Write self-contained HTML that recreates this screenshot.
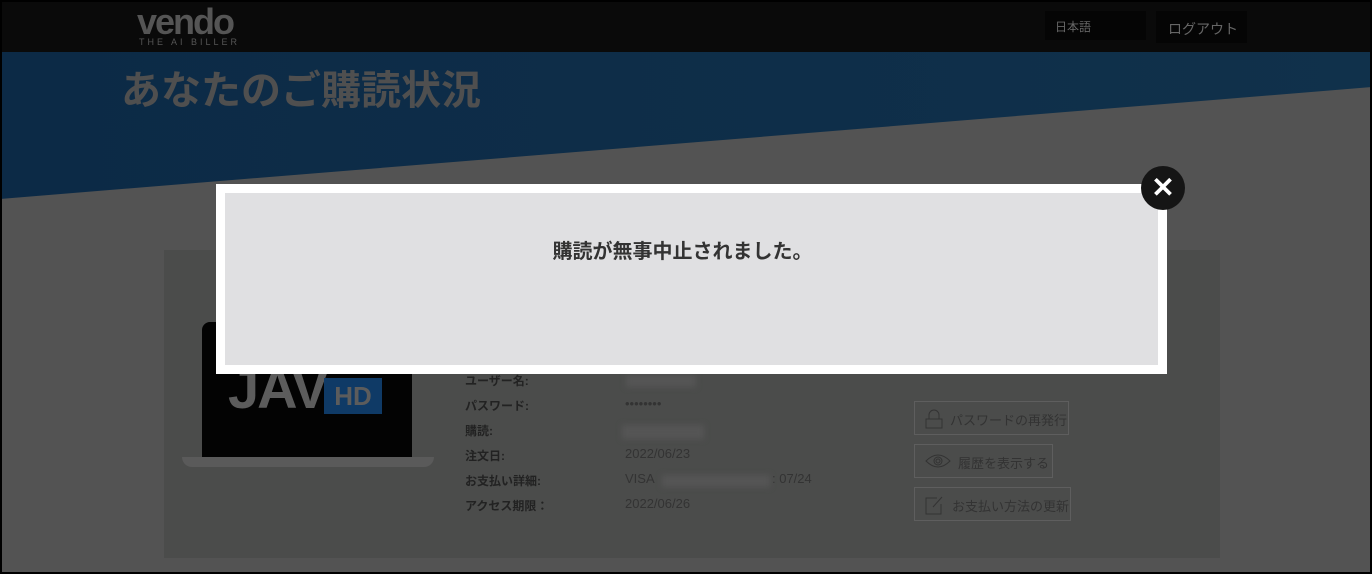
<!DOCTYPE html>
<html><head><meta charset="utf-8"><style>
*{margin:0;padding:0;box-sizing:border-box}
body{width:1372px;height:574px;overflow:hidden;background:#535353;font-family:"Liberation Sans","Noto Sans CJK JP",sans-serif;position:relative}
.border{position:absolute;left:0;top:0;width:1372px;height:574px;border:2px solid #000;z-index:50;pointer-events:none}
.hdr{position:absolute;left:0;top:0;width:100%;height:52px;background:#0a0a0a}
.blue{position:absolute;left:0;top:52px;width:100%;height:150px;background:linear-gradient(90deg,#0c2a46,#10314b);clip-path:polygon(0 0,100% 0,100% 35px,0 147px)}
.title{position:absolute;left:121px;top:58px;font-size:40px;font-weight:bold;color:#4f4f4f;letter-spacing:0}
.logo{position:absolute;left:137px;top:1px;color:#555;font-size:36px;font-weight:bold;letter-spacing:-2px}
.logo small{position:absolute;left:2px;top:36px;font-size:9px;letter-spacing:3px;font-weight:normal;white-space:nowrap}
.lang{position:absolute;left:1045px;top:11px;width:101px;height:29px;background:#050505;color:#666;font-size:12px;padding:7px 10px}
.out{position:absolute;left:1156px;top:11px;width:91px;height:32px;background:#050505;color:#666;font-size:14px;padding:8px 0 0 12px;white-space:nowrap}
.card{position:absolute;left:164px;top:250px;width:1056px;height:308px;background:#4b4c4b}
.lap{position:absolute;left:202px;top:322px;width:210px;height:140px;background:#030303;border-radius:8px 8px 0 0}
.lapbase{position:absolute;left:182px;top:457px;width:252px;height:10px;background:#5a5a5a;border-radius:0 0 30px 30px}
.jav{position:absolute;left:228px;top:356px;font-size:56px;font-weight:bold;color:#5c5c5c;letter-spacing:-2px}
.hd{position:absolute;left:324px;top:378px;width:58px;height:36px;background:#0f3a66;color:#5c5c5c;font-weight:bold;font-size:26px;text-align:center;line-height:36px}
.lbl{position:absolute;left:465px;font-size:12px;color:#222;font-weight:bold}
.val{position:absolute;left:625px;font-size:13px;color:#333}
.blur{position:absolute;background:#555;filter:blur(3px)}
.btn{position:absolute;left:914px;height:34px;border:1px solid #5e5e5e;color:#333;font-size:13px;padding:8px 0 0 35px;white-space:nowrap}
.modal{position:absolute;left:216px;top:184px;width:951px;height:190px;background:#fff;padding:9px}
.inner{width:100%;height:100%;background:#e0e0e2;text-align:center;padding-top:42px;padding-right:18px;font-size:20px;font-weight:bold;color:#333}
.close{position:absolute;left:1141px;top:166px;width:44px;height:44px;border-radius:50%;background:#151515;color:#fff;font-size:28px;font-weight:bold;text-align:center;line-height:43px}
</style></head><body>
<div class="hdr"></div>
<div class="logo">vendo<small>THE AI BILLER</small></div>
<div class="lang">日本語</div><div class="out">ログアウト</div>
<div class="blue"></div>
<div class="title">あなたのご購読状況</div>
<div class="card"></div>
<div style="position:absolute;left:914px;top:368px;width:185px;height:6px;background:#0c3a30"></div>
<div class="lap"></div><div class="lapbase"></div>
<div class="jav">JAV</div><div class="hd">HD</div>
<div class="lbl" style="top:372px">ユーザー名:</div>
<div class="lbl" style="top:397px">パスワード:</div>
<div class="lbl" style="top:422px">購読:</div>
<div class="lbl" style="top:447px">注文日:</div>
<div class="lbl" style="top:472px">お支払い詳細:</div>
<div class="lbl" style="top:497px">アクセス期限：</div>
<div class="blur" style="left:626px;top:375px;width:70px;height:12px"></div>
<div class="val" style="top:396px">••••••••</div>
<div class="blur" style="left:622px;top:425px;width:82px;height:14px"></div>
<div class="val" style="top:446px">2022/06/23</div>
<div class="val" style="top:471px">VISA</div>
<div class="val" style="top:471px;left:772px">: 07/24</div>
<div class="blur" style="left:662px;top:475px;width:108px;height:12px"></div>
<div class="val" style="top:496px">2022/06/26</div>
<div class="btn" style="top:401px;width:155px">パスワードの再発行
<svg style="position:absolute;left:10px;top:7px" width="18" height="20" viewBox="0 0 18 20" fill="none" stroke="#333"><path d="M4 10V6a5 5 0 0 1 10 0v4M1 10h16v9H1z"/></svg></div>
<div class="btn" style="top:444px;width:139px;padding-left:43px">履歴を表示する
<svg style="position:absolute;left:10px;top:9px" width="26" height="14" viewBox="0 0 26 14" fill="none" stroke="#333"><path d="M1 7Q13-5 25 7Q13 19 1 7z"/><circle cx="13" cy="7" r="4"/><circle cx="13" cy="7" r="2"/></svg></div>
<div class="btn" style="top:487px;width:157px;padding-left:37px">お支払い方法の更新
<svg style="position:absolute;left:10px;top:7px" width="20" height="20" viewBox="0 0 20 20" fill="none" stroke="#333"><path d="M12 3H1v16h15V9M8 12l9-10"/></svg></div>
<div class="modal"><div class="inner">購読が無事中止されました。</div></div>
<div class="close">✕</div>
<div class="border"></div>
</body></html>
